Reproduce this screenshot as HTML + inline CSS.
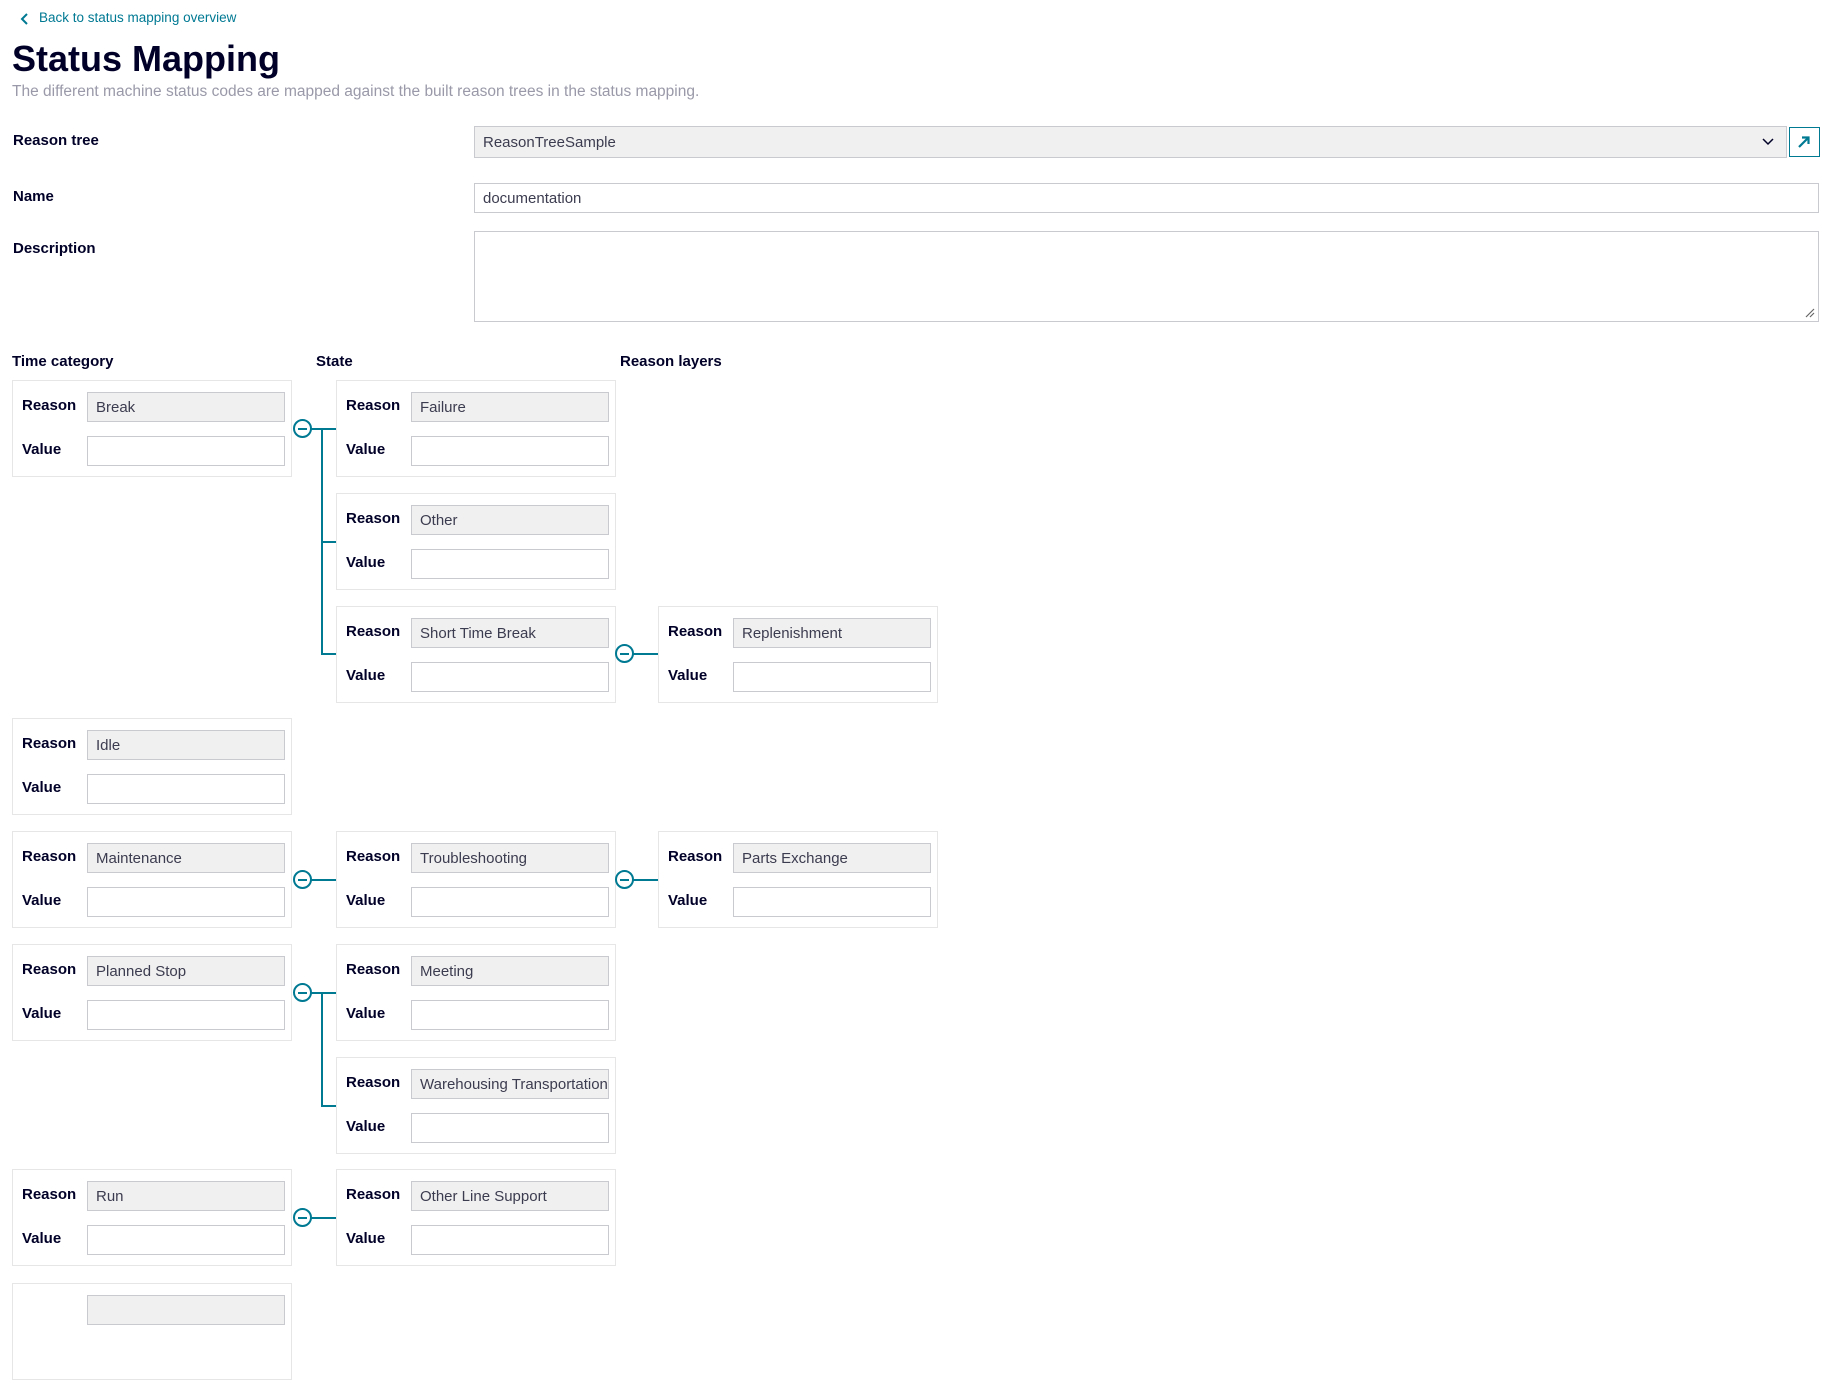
<!DOCTYPE html>
<html><head><meta charset="utf-8"><style>
*{box-sizing:border-box;margin:0;padding:0}
body{width:1833px;height:1295px;overflow:hidden;background:#fff;font-family:"Liberation Sans",sans-serif;color:#000028;position:relative}
.a{position:absolute}
.lbl{font-weight:bold;font-size:15px}
.inp{position:absolute;border:1px solid #c9c9d0;background:#fff;font-size:15px;color:#3c3c50;padding-left:8px;display:flex;align-items:center;white-space:nowrap;overflow:hidden}
.ro{background:#f0f0f0}
.card{position:absolute;width:280px;height:97px;border:1px solid #e6e6e6;background:#fff}
.card .l1,.card .l2{position:absolute;left:9px;font-weight:bold;font-size:15px}
.card .l1{top:16px}.card .l2{top:60px}
.card .i1{left:74px;top:11px;width:198px;height:30px}
.card .i2{left:74px;top:55px;width:198px;height:30px}
.mc{position:absolute;width:19px;height:19px;border:2px solid #007993;border-radius:50%;background:#fff}
.mc:after{content:"";position:absolute;left:3px;right:3px;top:6.5px;height:2px;background:#007993}
.h{position:absolute;height:1.5px;background:#007993}
.v{position:absolute;width:1.5px;background:#007993}
</style></head><body>
<svg class="a" style="left:20px;top:13px" width="10" height="12" viewBox="0 0 10 12"><path d="M7 1 L2 6 L7 11" fill="none" stroke="#007993" stroke-width="2"/></svg>
<div class="a" style="left:39px;top:10px;font-size:13.5px;color:#007993">Back to status mapping overview</div>
<div class="a" style="left:12px;top:38px;font-size:36px;font-weight:bold">Status Mapping</div>
<div class="a" style="left:12px;top:83px;font-size:15.5px;color:#9999a9">The different machine status codes are mapped against the built reason trees in the status mapping.</div>

<div class="a lbl" style="left:13px;top:132px">Reason tree</div>
<div class="inp ro" style="left:474px;top:126px;width:1313px;height:32px">ReasonTreeSample</div>
<svg class="a" style="left:1762px;top:136px" width="12" height="10" viewBox="0 0 12 10"><path d="M1 3 L6 8 L11 3" fill="none" stroke="#000028" stroke-width="1.5"/></svg>
<div class="a" style="left:1789px;top:127px;width:31px;height:30px;border:1.5px solid #007993"></div>
<svg class="a" style="left:1796px;top:134px" width="16" height="16" viewBox="0 0 16 16"><path d="M3 13 L12 4 M6 3.5 H12.5 V10" fill="none" stroke="#007993" stroke-width="2.2"/></svg>

<div class="a lbl" style="left:13px;top:188px">Name</div>
<div class="inp" style="left:474px;top:183px;width:1345px;height:30px">documentation</div>
<div class="a lbl" style="left:13px;top:240px">Description</div>
<div class="inp" style="left:474px;top:231px;width:1345px;height:91px"></div>
<svg class="a" style="left:1805px;top:308px" width="10" height="10" viewBox="0 0 10 10"><path d="M1 9 L9 1 M5 9 L9 5" stroke="#666" stroke-width="1.2"/></svg>

<div class="a lbl" style="left:12px;top:353px">Time category</div>
<div class="a lbl" style="left:316px;top:353px">State</div>
<div class="a lbl" style="left:620px;top:353px">Reason layers</div>

<!-- cards: TC x=12, State x=336, RL x=658 -->
<div class="card" style="left:12px;top:380px"><div class="l1">Reason</div><div class="inp ro i1">Break</div><div class="l2">Value</div><div class="inp i2"></div></div>
<div class="card" style="left:336px;top:380px"><div class="l1">Reason</div><div class="inp ro i1">Failure</div><div class="l2">Value</div><div class="inp i2"></div></div>
<div class="card" style="left:336px;top:493px"><div class="l1">Reason</div><div class="inp ro i1">Other</div><div class="l2">Value</div><div class="inp i2"></div></div>
<div class="card" style="left:336px;top:606px"><div class="l1">Reason</div><div class="inp ro i1">Short Time Break</div><div class="l2">Value</div><div class="inp i2"></div></div>
<div class="card" style="left:658px;top:606px"><div class="l1">Reason</div><div class="inp ro i1">Replenishment</div><div class="l2">Value</div><div class="inp i2"></div></div>
<div class="card" style="left:12px;top:718px"><div class="l1">Reason</div><div class="inp ro i1">Idle</div><div class="l2">Value</div><div class="inp i2"></div></div>
<div class="card" style="left:12px;top:831px"><div class="l1">Reason</div><div class="inp ro i1">Maintenance</div><div class="l2">Value</div><div class="inp i2"></div></div>
<div class="card" style="left:336px;top:831px"><div class="l1">Reason</div><div class="inp ro i1">Troubleshooting</div><div class="l2">Value</div><div class="inp i2"></div></div>
<div class="card" style="left:658px;top:831px"><div class="l1">Reason</div><div class="inp ro i1">Parts Exchange</div><div class="l2">Value</div><div class="inp i2"></div></div>
<div class="card" style="left:12px;top:944px"><div class="l1">Reason</div><div class="inp ro i1">Planned Stop</div><div class="l2">Value</div><div class="inp i2"></div></div>
<div class="card" style="left:336px;top:944px"><div class="l1">Reason</div><div class="inp ro i1">Meeting</div><div class="l2">Value</div><div class="inp i2"></div></div>
<div class="card" style="left:336px;top:1057px"><div class="l1">Reason</div><div class="inp ro i1">Warehousing Transportation</div><div class="l2">Value</div><div class="inp i2"></div></div>
<div class="card" style="left:12px;top:1169px"><div class="l1">Reason</div><div class="inp ro i1">Run</div><div class="l2">Value</div><div class="inp i2"></div></div>
<div class="card" style="left:336px;top:1169px"><div class="l1">Reason</div><div class="inp ro i1">Other Line Support</div><div class="l2">Value</div><div class="inp i2"></div></div>
<div class="card" style="left:12px;top:1283px"><div class="inp ro i1"></div></div>

<!-- connectors -->
<div class="h" style="left:310px;top:428px;width:26px"></div>
<div class="v" style="left:321px;top:428px;height:226px"></div>
<div class="h" style="left:321px;top:541px;width:15px"></div>
<div class="h" style="left:321px;top:653px;width:15px"></div>
<div class="mc" style="left:293px;top:419px"></div>

<div class="h" style="left:632px;top:653px;width:26px"></div>
<div class="mc" style="left:615px;top:644px"></div>

<div class="h" style="left:310px;top:879px;width:26px"></div>
<div class="mc" style="left:293px;top:870px"></div>
<div class="h" style="left:632px;top:879px;width:26px"></div>
<div class="mc" style="left:615px;top:870px"></div>

<div class="h" style="left:310px;top:992px;width:26px"></div>
<div class="v" style="left:321px;top:992px;height:113px"></div>
<div class="h" style="left:321px;top:1105px;width:15px"></div>
<div class="mc" style="left:293px;top:983px"></div>

<div class="h" style="left:310px;top:1217px;width:26px"></div>
<div class="mc" style="left:293px;top:1208px"></div>
</body></html>
